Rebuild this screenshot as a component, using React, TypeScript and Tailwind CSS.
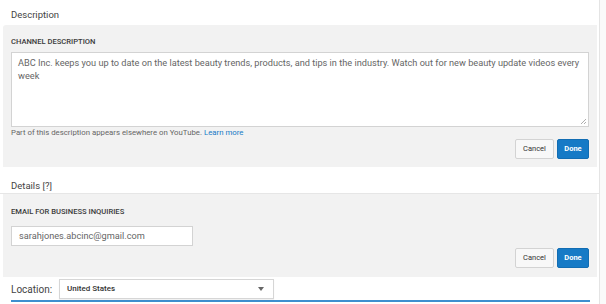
export default function App() {
  return (
    <div className="w-[606px] h-[304px] overflow-hidden flex bg-[#fafafa] font-['Roboto',sans-serif]">
      <div className="w-[600px] shrink-0 bg-white border-r border-[#e4e4e4]">
        {/* Description */}
        <div className="h-[25px] pl-[11px] pt-[9px] text-[9.5px] leading-[12px] text-[#444]">Description</div>
        <div className="ml-[3px] mr-[2px] h-[142px] bg-[#f2f2f2] rounded-tl-[3px] px-[8px] pt-[12px]">
          <div className="text-[7.6px] leading-[10px] font-medium text-[#3a3a3a] uppercase">Channel description</div>
          <div className="mt-[5px] h-[75px] bg-white border border-[#d3d3d3] px-[6px] pt-[3px] text-[9.2px] leading-[13px] text-[#666] relative">
            ABC Inc. keeps you up to date on the latest beauty trends, products, and tips in the industry. Watch out for new beauty update videos every week
            <svg className="absolute right-[1px] bottom-[1px]" width="7" height="7" viewBox="0 0 7 7">
              <path d="M6 1L1 6M6 4L4 6" stroke="#999" strokeWidth="0.8" />
            </svg>
          </div>
          <div className="mt-[1px] text-[7.8px] leading-[9px] text-[#666]">
            Part of this description appears elsewhere on YouTube. <span className="text-[#167ac6]">Learn more</span>
          </div>
          <div className="mt-[2px] flex justify-end gap-[3px]">
            <button className="w-[39px] h-[20px] bg-[#f8f8f8] border border-[#d3d3d3] rounded-[2px] text-[7.5px] text-[#333]">Cancel</button>
            <button className="w-[32px] h-[20px] bg-[#167ac6] border border-[#126db3] rounded-[2px] text-[7.5px] font-bold text-white">Done</button>
          </div>
        </div>

        {/* Details */}
        <div className="h-[27px] pl-[11px] pt-[13px] text-[9.5px] leading-[12px] text-[#444] border-b border-[#e6e6e6]">Details [?]</div>
        <div className="ml-[3px] mr-[2px] h-[83px] bg-[#f2f2f2] px-[8px] pt-[13px]">
          <div className="text-[7.6px] leading-[10px] font-medium text-[#3a3a3a] uppercase">Email for business inquiries</div>
          <div className="mt-[9px] w-[182px] h-[20px] bg-white border border-[#d3d3d3] px-[7px] flex items-center text-[9.2px] text-[#666]">
            sarahjones.abcinc@gmail.com
          </div>
          <div className="mt-[2px] flex justify-end gap-[3px]">
            <button className="w-[39px] h-[20px] bg-[#f8f8f8] border border-[#d3d3d3] rounded-[2px] text-[7.5px] text-[#333]">Cancel</button>
            <button className="w-[32px] h-[20px] bg-[#167ac6] border border-[#126db3] rounded-[2px] text-[7.5px] font-bold text-white">Done</button>
          </div>
        </div>

        {/* Location */}
        <div className="h-[23px] flex items-center pl-[11px] pt-[1px]">
          <span className="w-[48px] text-[10px] text-[#444]">Location:</span>
          <div className="w-[215px] h-[20px] border border-[#d6d6d6] bg-white flex items-center justify-between pl-[7px] pr-[9px] shadow-[0_1px_1px_rgba(0,0,0,0.05)]">
            <span className="text-[8px] font-medium text-[#333]">United States</span>
            <svg width="6" height="4" viewBox="0 0 6 4">
              <path d="M0 0H6L3 4Z" fill="#666" />
            </svg>
          </div>
        </div>
        <div className="ml-[11px] w-[579px] h-[2px] bg-[#3d8fcf]" />
      </div>
    </div>
  );
}
